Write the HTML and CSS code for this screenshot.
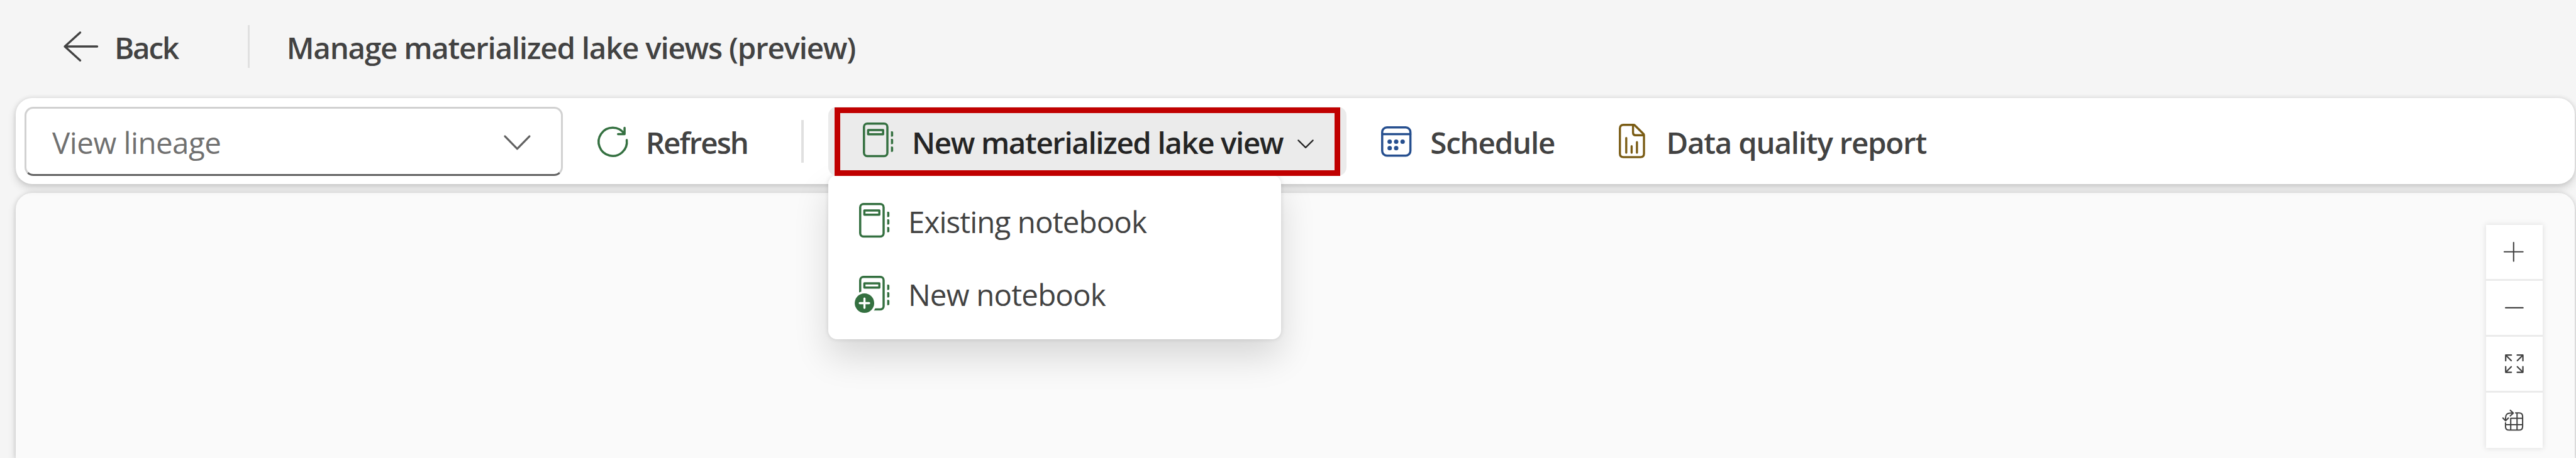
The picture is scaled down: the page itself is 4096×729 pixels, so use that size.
FILE: index.html
```html
<!DOCTYPE html>
<html lang="en">
<head>
<meta charset="utf-8">
<title>Manage materialized lake views</title>
<link rel="stylesheet" href="styles.css">
</head>
<body>
<svg class="sprite" aria-hidden="true">
  <symbol id="notebook" viewBox="0 0 52 60">
    <rect x="1.9" y="1.9" width="40" height="55.6" rx="5.6" fill="none" stroke="currentColor" stroke-width="3.75"/>
    <rect x="9" y="13" width="25.6" height="7.2" fill="none" stroke="currentColor" stroke-width="3.75"/>
    <path d="M48 15h1.8q2.2 0 2.2 2.2v4.8q0 2.2-2.2 2.2H48zM48 28h1.8q2.2 0 2.2 2.2V35q0 2.2-2.2 2.2H48zM48 41h1.8q2.2 0 2.2 2.2V48q0 2.2-2.2 2.2H48z" fill="currentColor"/>
  </symbol>
</svg>

<header class="header">
  <button class="back">
    <svg class="icon-back" viewBox="0 0 60 52"><path d="M28.5 2 2.2 25.8 28.5 49.6M2.2 25.8H57.5"/></svg>
    <span class="label label-back">Back</span>
  </button>
  <span class="rule"></span>
  <h1 class="label title">Manage materialized lake views (preview)</h1>
</header>

<div class="toolbar">
  <div class="select">
    <span class="select-value">View lineage</span>
    <svg class="icon-select" viewBox="0 0 46 26"><path d="M2 2 23 23.5 44 2"/></svg>
  </div>
  <button class="tool refresh">
    <svg class="icon-refresh" viewBox="0 0 52 52"><path d="M50 23.5A24.1 24.1 0 1 1 46 13M46.3 2.6V13.4H35.2"/></svg>
    <span class="label label-refresh">Refresh</span>
  </button>
  <span class="rule rule-tool"></span>
  <div class="dropdown">
    <button class="tool split">
      <svg class="icon-notebook"><use href="#notebook"/></svg>
      <span class="label label-new">New materialized lake view</span>
      <svg class="icon-chevron" viewBox="0 0 28 16"><path d="M1.5 1.5 14 13.8 26.5 1.5"/></svg>
    </button>
    <div class="menu">
      <div class="menu-item">
        <svg class="icon-notebook"><use href="#notebook"/></svg>
        <span class="menu-label existing">Existing notebook</span>
      </div>
      <div class="menu-item">
        <span class="icon-new">
          <svg class="icon-notebook"><use href="#notebook"/></svg>
          <svg class="badge" viewBox="0 0 42 42"><circle cx="21" cy="21" r="20.5" fill="#fff"/><circle cx="21" cy="21" r="16.6" fill="#347040"/><path d="M21 13v16M13 21h16"/></svg>
        </span>
        <span class="menu-label new">New notebook</span>
      </div>
    </div>
  </div>
  <button class="tool schedule">
    <svg class="icon-calendar" viewBox="0 0 52 52">
      <rect x="1.9" y="1.9" width="48.2" height="48.2" rx="8"/><path d="M2 13.5h48"/>
      <g class="dots"><circle cx="14.7" cy="26.3" r="3.8"/><circle cx="25.8" cy="26.3" r="3.8"/><circle cx="36.8" cy="26.3" r="3.8"/><circle cx="14.7" cy="37.3" r="3.8"/><circle cx="25.8" cy="37.3" r="3.8"/></g>
    </svg>
    <span class="label label-schedule">Schedule</span>
  </button>
  <button class="tool report">
    <svg class="icon-report" viewBox="0 0 45 59"><path d="M25.2 1.9H7.9q-6 0-6 6v43.2q0 6 6 6H37q6 0 6-6V19.6q0-1.400-1-2.400L27.600 2.900Q26.600 1.900 25.200 1.900M24.300 2.500V15.200q0 4.400 4.400 4.400H42.500M12.700 24.300V49.400M21.900 38.300V49.400M31 31.300V49.400"/></svg>
    <span class="label label-report">Data quality report</span>
  </button>
</div>

<main class="canvas">
  <div class="controls">
    <button class="control"><svg class="icon-plus" viewBox="0 0 34 34"><path d="M17 1V33M1 17H33"/></svg></button>
    <button class="control"><svg class="icon-minus" viewBox="0 0 32 32"><path d="M1.200 16H30.800"/></svg></button>
    <button class="control"><svg class="icon-expand" viewBox="0 0 32 32"><path d="M1.300 11V1.300H11M1.300 1.300 10.800 10.800M21 1.300H30.700V11M30.700 1.300 21.200 10.800M1.300 21V30.700H11M1.300 30.700 10.800 21.200M21 30.700H30.700V21M30.700 30.700 21.200 21.200"/></svg></button>
    <button class="control last"><svg class="icon-layout" viewBox="0 0 36 36"><path d="M22.500 5.600H28.500q6 0 6 6V29q0 6-6 6H11.300q-6 0-6-6V22.600M14.200 35V14.800H34.500M25 5.600V35M5.300 25.700H34.500M5.400 18.500V14q0-8 8-8H18M13.400 1.200 18.600 6 13.400 10.800M.8 14.200 5.400 19.200 10.300 14.200"/></svg></button>
  </div>
</main>
</body>
</html>
```
FILE: styles.css
```css
/* 1rem = 10 design pixels on a 4400px wide artboard */
html {
  font-size: calc(100vw / 440);
}

*, *::before, *::after {
  box-sizing: border-box;
}

body {
  margin: 0;
  height: 100vh;
  overflow: hidden;
  display: flex;
  flex-direction: column;
  background: #f5f5f5;
  color: #424242;
  font-family: "Open Sans", "Noto Sans", sans-serif;
}

button {
  margin: 0;
  padding: 0;
  border: 0;
  background: none;
  color: inherit;
  font: inherit;
}

svg {
  display: block;
  flex: none;
  overflow: visible;
  fill: none;
  stroke: currentColor;
  stroke-linecap: round;
  stroke-linejoin: round;
}

.sprite {
  position: absolute;
  width: 0;
  height: 0;
}

.label,
.select-value,
.menu-label {
  padding-top: 0.3rem;
  font-size: 5.1rem;
  line-height: 7rem;
  white-space: nowrap;
}

.label {
  margin: 0;
  font-weight: 600;
  text-align: left;
}

/* Header */
.header {
  flex: none;
  display: flex;
  align-items: center;
  height: 16rem;
  margin-bottom: 0.8rem;
  padding-left: 10.8rem;
}

.back {
  display: flex;
  align-items: center;
  width: 31.5rem;
  gap: 2.75rem;
}

.icon-back {
  width: 6rem;
  height: 5.2rem;
  stroke-width: 3.6;
}

.label-back { letter-spacing: -0.23rem; }

.rule {
  width: 0.37rem;
  height: 7.3rem;
  background: #e0e0e0;
}

.title {
  margin-left: 6.3rem;
  letter-spacing: -0.132rem;
}

/* Toolbar */
.toolbar {
  position: relative;
  z-index: 1;
  flex: none;
  display: flex;
  align-items: center;
  height: 14.7rem;
  margin: 0 0.25rem 0 2.7rem;
  padding-left: 1.5rem;
  border-radius: 2.8rem;
  background: #fff;
  box-shadow: 0 0 0.75rem rgba(0, 0, 0, 0.12), 0 0.75rem 1.5rem rgba(0, 0, 0, 0.14);
}

.select {
  display: flex;
  align-items: center;
  justify-content: space-between;
  width: 91.9rem;
  height: 11.8rem;
  padding: 0 5.1rem 0 4.4rem;
  border: 0.375rem solid #d1d1d1;
  border-bottom-color: #616161;
  border-radius: 1.5rem;
  color: #707070;
}

.select-value { letter-spacing: -0.056rem; }

.icon-select {
  width: 4.6rem;
  height: 2.6rem;
  margin-top: 0.5rem;
  color: #616161;
  stroke-width: 3.3;
}

.tool {
  display: flex;
  align-items: center;
}

.refresh { margin-left: 5.9rem; }

.icon-refresh {
  width: 5.2rem;
  height: 5.2rem;
  color: #347040;
  stroke-width: 3.75;
}

.label-refresh {
  width: 18rem;
  margin-left: 3.1rem;
  letter-spacing: -0.21rem;
}

.rule-tool { margin-left: 8.6rem; }

.dropdown {
  position: relative;
  margin-left: 4.25rem;
}

.split {
  position: relative;
  z-index: 1;
  width: 88.5rem;
  height: 11.8rem;
  padding-left: 5.9rem;
  border-radius: 1.5rem;
  background: #ebebeb;
  color: #242424;
}

/* Highlight frame around the open button */
.split::after {
  content: "";
  position: absolute;
  inset: 0.15rem 1.05rem -0.05rem;
  border: 1rem solid #c00000;
}

.icon-notebook {
  width: 5.2rem;
  height: 6rem;
  color: #347040;
  stroke: none;
}

.split .icon-notebook { margin-top: -0.5rem; }

.label-new {
  width: 64.5rem;
  margin-left: 3.15rem;
  letter-spacing: -0.15rem;
}

.icon-chevron {
  width: 2.8rem;
  height: 1.6rem;
  margin: 0.9rem 0 0 1.3rem;
  stroke-width: 2.4;
}

/* Menu */
.menu {
  position: absolute;
  top: 11.75rem;
  left: 0;
  width: 77.3rem;
  height: 28rem;
  padding: 1.45rem 0;
  border-radius: 1.5rem;
  background: #fff;
  box-shadow: 0 0 0.75rem rgba(0, 0, 0, 0.12), 0 3rem 6rem rgba(0, 0, 0, 0.14);
}

.menu-item {
  display: flex;
  align-items: center;
  height: 12.5rem;
  padding-left: 5.2rem;
}

.menu-label { margin-left: 3.2rem; }
.existing { letter-spacing: -0.096rem; }
.new { letter-spacing: -0.088rem; }

.icon-new { position: relative; }

.badge {
  position: absolute;
  left: -1.2rem;
  top: 2.5rem;
  width: 4.2rem;
  height: 4.2rem;
  color: #fff;
}

.badge circle { stroke: none; }
.badge path { stroke-width: 3.6; }

.schedule { margin-left: 5.9rem; }

.icon-calendar {
  width: 5.2rem;
  height: 5.2rem;
  color: #264f8f;
  stroke-width: 3.75;
}

.dots {
  fill: currentColor;
  stroke: none;
}

.label-schedule {
  width: 22rem;
  margin-left: 3.2rem;
  letter-spacing: -0.13rem;
}

.report { margin-left: 10.15rem; }

.icon-report {
  width: 4.5rem;
  height: 5.9rem;
  color: #7a5c14;
  stroke-width: 3.6;
}

.label-report {
  margin-left: 3.65rem;
  letter-spacing: -0.132rem;
}

/* Canvas */
.canvas {
  flex: 1;
  display: flex;
  align-items: flex-start;
  justify-content: flex-end;
  margin: 1.5rem 0.25rem 0 2.7rem;
  padding: 5.45rem 5.5rem 0 0;
  border-radius: 2.8rem 2.8rem 0 0;
  background: #fafafa;
  box-shadow: 0 0 0.75rem rgba(0, 0, 0, 0.12), 0 0.75rem 1.5rem rgba(0, 0, 0, 0.14);
}

.controls {
  display: flex;
  flex-direction: column;
  gap: 0.3rem;
  width: 9.6rem;
  background: #ebebeb;
  box-shadow: 0 0 0.9rem 0.1rem rgba(0, 0, 0, 0.1);
}

.control {
  display: flex;
  align-items: center;
  justify-content: center;
  height: 9.25rem;
  background: #fff;
}

.last { height: 9.55rem; }

.icon-plus {
  width: 3.4rem;
  height: 3.4rem;
  margin-right: 0.2rem;
  stroke-width: 2.2;
}

.icon-minus,
.icon-expand {
  width: 3.2rem;
  height: 3.2rem;
  stroke-width: 2.4;
}

.icon-layout {
  width: 3.6rem;
  height: 3.6rem;
  margin-right: 0.4rem;
  stroke-width: 2.2;
}
```
